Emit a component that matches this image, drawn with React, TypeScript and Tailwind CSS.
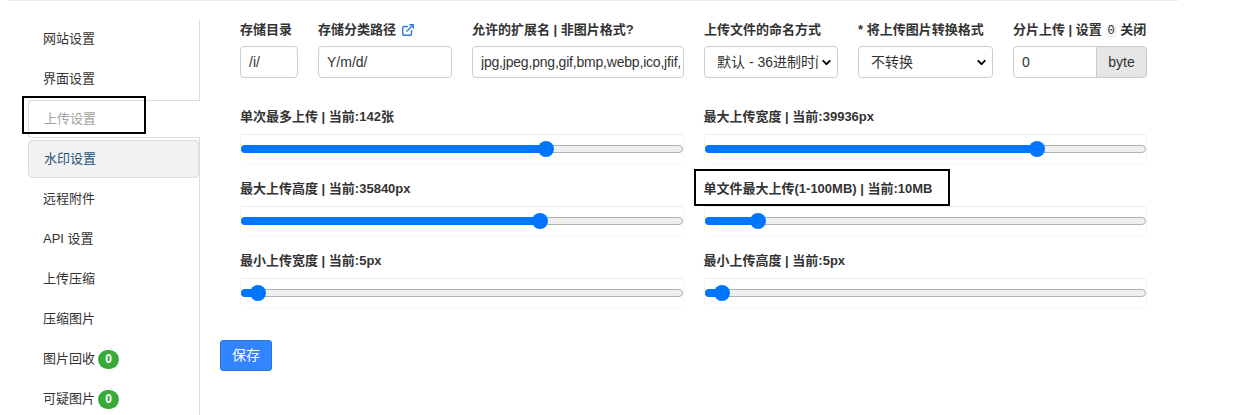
import React from 'react';
import { ChevronDown, ExternalLink } from 'lucide-react';

const navItems = [
  { label: '网站设置' },
  { label: '界面设置' },
  { label: '上传设置', active: true },
  { label: '水印设置', hover: true },
  { label: '远程附件' },
  { label: 'API 设置' },
  { label: '上传压缩' },
  { label: '压缩图片' },
  { label: '图片回收', badge: 0 },
  { label: '可疑图片', badge: 0 },
];

const sliders = [
  { label: '单次最多上传 | 当前:142张', value: 0.699 },
  { label: '最大上传宽度 | 当前:39936px', value: 0.765 },
  { label: '最大上传高度 | 当前:35840px', value: 0.685 },
  { label: '单文件最大上传(1-100MB) | 当前:10MB', value: 0.106, marked: true },
  { label: '最小上传宽度 | 当前:5px', value: 0.019 },
  { label: '最小上传高度 | 当前:5px', value: 0.021 },
];

const Slider: React.FC<{ value: number }> = ({ value }) => {
  const pos = `calc(8px + ${value} * (100% - 16px))`;
  return (
    <div className="h-[30px] rounded border border-[#f6f6f6] border-t-[#ededed] flex items-center">
      <div className="relative w-full h-2 rounded-full bg-[#efefef] border border-[#b2b2b2]">
        <div
          className="absolute -left-px -top-px -bottom-px rounded-full bg-[#0075ff]"
          style={{ width: `calc(${pos} + 1px)` }}
        />
        <div
          className="absolute top-1/2 w-4 h-4 -ml-2 -mt-2 rounded-full bg-[#0075ff]"
          style={{ left: pos }}
        />
      </div>
    </div>
  );
};

const Label: React.FC<{ children: React.ReactNode }> = ({ children }) => (
  <div className="h-[18px] leading-[18px] text-[13px] font-bold text-[#333] whitespace-nowrap">{children}</div>
);

export default function App() {
  return (
    <div className="w-[1247px] h-[415px] bg-white overflow-hidden font-['Liberation_Sans','Noto_Sans_CJK_SC',sans-serif] text-[#333]">
      <div className="ml-2 w-[1170px] h-px bg-[#e6ecf4]" />
      <div className="flex">
        {/* Sidebar */}
        <aside className="ml-2 mt-[19px] w-[192px] h-[400px] pl-5 border-r border-[#ddd] flex flex-col gap-[2px]">
          {navItems.map((item) => (
            <div
              key={item.label}
              className={`relative h-[38px] px-[15px] flex items-center text-[13px] ${
                item.active
                  ? '-mr-px bg-white border border-r-0 border-[#ddd] rounded-l text-[#a3a3a3]'
                  : item.hover
                  ? 'bg-[#f2f2f2] border border-[#ddd] rounded text-[#23527c]'
                  : 'text-[#333]'
              }`}
            >
              {item.label}
              {item.badge !== undefined && (
                <span className="ml-[3px] w-[21px] h-[19px] rounded-full bg-[#3aa93a] text-white text-[12px] font-bold flex items-center justify-center">
                  {item.badge}
                </span>
              )}
              {item.active && (
                <span className="absolute left-[-7px] top-[-5px] w-[124px] h-[38px] border-2 border-black pointer-events-none" />
              )}
            </div>
          ))}
        </aside>

        {/* Main */}
        <main className="flex-1 pl-5 pt-5">
          <div className="pl-5 w-[927px]">
            {/* Top row */}
            <div className="flex gap-5">
              <div className="w-[58px]">
                <Label>存储目录</Label>
                <div className="mt-[7px] h-8 border border-[#ccc] rounded px-2 flex items-center text-[14px]">/i/</div>
              </div>
              <div className="w-[134px]">
                <Label>
                  <span className="flex items-center gap-[5px]">
                    存储分类路径
                    <ExternalLink className="w-[14px] h-[14px] text-[#2b7de3]" strokeWidth={2.4} />
                  </span>
                </Label>
                <div className="mt-[7px] h-8 border border-[#ccc] rounded px-2 flex items-center text-[14px]">Y/m/d/</div>
              </div>
              <div className="w-[212px]">
                <Label>允许的扩展名 | 非图片格式?</Label>
                <div className="mt-[7px] h-8 border border-[#ccc] rounded pl-2 pr-[2px] flex items-center text-[14px] overflow-hidden whitespace-nowrap">
                  <span className="overflow-hidden tracking-[-0.2px]">jpg,jpeg,png,gif,bmp,webp,ico,jfif,tiff</span>
                </div>
              </div>
              <div className="w-[134px]">
                <Label>上传文件的命名方式</Label>
                <div className="mt-[7px] h-8 border border-[#ccc] rounded pl-3 pr-[4px] flex items-center text-[14px]">
                  <span className="w-[101px] overflow-hidden whitespace-nowrap">默认 - 36进制时间戳</span>
                  <ChevronDown className="ml-auto w-[13px] h-[13px] text-black" strokeWidth={3.5} />
                </div>
              </div>
              <div className="w-[135px]">
                <Label>* 将上传图片转换格式</Label>
                <div className="mt-[7px] h-8 border border-[#ccc] rounded pl-3 pr-[4px] flex items-center text-[14px]">
                  <span className="whitespace-nowrap">不转换</span>
                  <ChevronDown className="ml-auto w-[13px] h-[13px] text-black" strokeWidth={3.5} />
                </div>
              </div>
              <div className="w-[134px]">
                <Label>
                  分片上传 | 设置{' '}
                  <code className="font-['Liberation_Mono',monospace] font-normal text-[12px] bg-[#f4f4f4] rounded px-[2px]">0</code>{' '}
                  关闭
                </Label>
                <div className="mt-[7px] h-8 flex text-[14px]">
                  <div className="w-[84px] border border-[#ccc] rounded-l px-2 flex items-center">0</div>
                  <div className="flex-1 -ml-px border border-[#ccc] rounded-r bg-[#e6e6e6] flex items-center justify-center">byte</div>
                </div>
              </div>
            </div>

            {/* Sliders */}
            <div className="mt-[30px] grid grid-cols-2 gap-x-5 gap-y-4">
              {sliders.map((s) => (
                <div key={s.label}>
                  <div className="relative">
                    <Label>{s.label}</Label>
                    {s.marked && (
                      <span className="absolute left-[-10px] top-[-11px] w-[256px] h-[37px] border-2 border-black pointer-events-none" />
                    )}
                  </div>
                  <div className="mt-2">
                    <Slider value={s.value} />
                  </div>
                </div>
              ))}
            </div>
          </div>

          <button className="mt-8 h-[31px] px-[11px] rounded-[3px] bg-[#3384ff] border border-[#2a74e6] text-white text-[14px]">
            保存
          </button>
        </main>
      </div>
    </div>
  );
}
